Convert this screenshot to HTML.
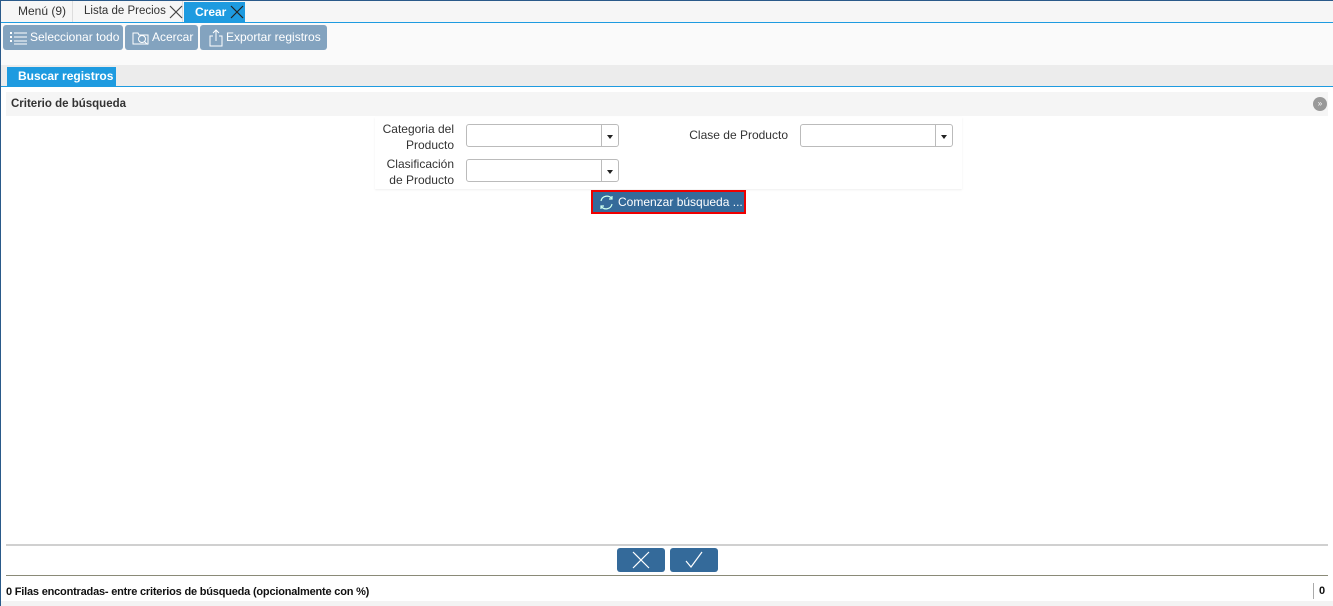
<!DOCTYPE html>
<html><head><meta charset="utf-8"><style>
*{box-sizing:border-box;margin:0;padding:0}
body{width:1333px;height:606px;overflow:hidden;background:#fff;font-family:"Liberation Sans",sans-serif;font-size:12px;color:#333;position:relative}
.a{position:absolute;white-space:nowrap}
.tab{position:absolute;top:1px;height:21px;line-height:21px;font-size:12px;color:#333;border-right:1px solid #ddd;white-space:nowrap}
.tb{position:absolute;top:25px;height:25px;background:#83a3bf;border-radius:3px;color:#fff;font-size:12px;line-height:25px;white-space:nowrap;overflow:hidden}
.lbl{position:absolute;text-align:right;font-size:12px;color:#333;line-height:16px}
.sel{position:absolute;width:153px;height:23px;border:1px solid #bbb;border-radius:3px;background:#fff}
.sel:after{content:"";position:absolute;right:0;top:0;width:16px;height:21px;border-left:1px solid #bbb}
.sel i{position:absolute;right:5px;top:10px;border-left:3px solid transparent;border-right:3px solid transparent;border-top:4px solid #222}
.bb{position:absolute;top:548px;width:48px;height:24px;background:#346a9a;border-radius:3px}
</style></head><body>
<div class="a" style="left:0;top:0;width:1333px;height:22px;background:#f6f6f6"></div>
<div class="a" style="left:0;top:0;width:1333px;height:1px;background:#2a5a8a"></div>
<div class="tab" style="left:6px;width:67px;padding-left:12px">Menú (9)</div>
<div class="tab" style="left:73px;width:110px;padding-left:11px;font-size:11.5px">Lista de Precios</div>
<svg class="a" style="left:169px;top:5px" width="14" height="14"><path d="M1 1L13 13M13 1L1 13" stroke="#444" stroke-width="1.2"/></svg>
<div class="a" style="left:184px;top:2px;width:61px;height:20px;background:#1e9be0;color:#fff;font-weight:bold;line-height:20px;padding-left:11px">Crear</div>
<svg class="a" style="left:230px;top:5px" width="14" height="14"><path d="M1 1L13 13M13 1L1 13" stroke="#222" stroke-width="1.2"/></svg>
<div class="a" style="left:0;top:22px;width:1333px;height:1px;background:#1e9be0"></div>
<div class="a" style="left:0;top:23px;width:1333px;height:42px;background:#fafafa"></div>
<div class="tb" style="left:3px;width:120px;padding-left:27px">Seleccionar todo</div>
<svg class="a" style="left:10px;top:31px" width="18" height="14"><g fill="#fff"><rect x="0" y="1" width="2" height="2"/><rect x="0" y="5" width="2" height="2"/><rect x="0" y="9" width="2" height="2"/><rect x="4" y="1.5" width="13" height="1"/><rect x="4" y="5.5" width="13" height="1"/><rect x="4" y="9.5" width="13" height="1"/><rect x="4" y="12.5" width="13" height="1"/></g></svg>
<div class="tb" style="left:125px;width:73px;padding-left:27px">Acercar</div>
<svg class="a" style="left:132px;top:30px" width="18" height="16"><g fill="none" stroke="#fff"><path d="M1 3h5l1 2h9v9H1z"/><circle cx="10" cy="9" r="3.5"/><path d="M12.5 11.5l3 3"/></g></svg>
<div class="tb" style="left:200px;width:127px;padding-left:26px">Exportar registros</div>
<svg class="a" style="left:208px;top:29px" width="16" height="18"><g fill="none" stroke="#fff"><path d="M5 7H2v10h12V7h-3M8 12V1M5 4l3-3 3 3"/></g></svg>
<div class="a" style="left:0;top:65px;width:1333px;height:21px;background:#ececec"></div>
<div class="a" style="left:7px;top:67px;width:109px;height:19px;background:#1e9be0;color:#fff;font-weight:bold;font-size:12px;line-height:18px;padding-left:11px">Buscar registros</div>
<div class="a" style="left:0;top:86px;width:1333px;height:1px;background:#1e9be0"></div>
<div class="a" style="left:6px;top:92px;width:1322px;height:24px;background:#f5f5f5;font-weight:bold;font-size:11.5px;line-height:24px;padding-left:5px">Criterio de búsqueda</div>
<div class="a" style="left:1313px;top:97px;width:14px;height:14px;border-radius:50%;background:#999;color:#fff;font-size:8px;text-align:center;line-height:13px">»</div>
<div class="a" style="left:375px;top:117px;width:587px;height:72px;background:#fff;box-shadow:0 1px 2px #eee"></div>
<div class="lbl" style="left:370px;top:121px;width:84px">Categoria del<br>Producto</div>
<div class="sel" style="left:466px;top:124px"><i></i></div>
<div class="lbl" style="left:680px;top:127px;width:108px">Clase de Producto</div>
<div class="sel" style="left:800px;top:124px"><i></i></div>
<div class="lbl" style="left:370px;top:156px;width:84px">Clasificación<br>de Producto</div>
<div class="sel" style="left:466px;top:159px"><i></i></div>
<div class="a" style="left:591px;top:190px;width:155px;height:24px;border:2px solid #e00;background:#356a9a;color:#fff;font-size:12px;line-height:20px;padding-left:25px">Comenzar búsqueda ...</div>
<svg class="a" style="left:598px;top:194px" width="17" height="17"><g fill="none" stroke="#cfe" stroke-width="1.2"><path d="M3 7a6 6 0 0 1 11-2M14 10a6 6 0 0 1-11 2"/><path d="M14 2v3h-3M3 15v-3h3"/></g></svg>
<div class="a" style="left:6px;top:544px;width:1322px;height:2px;background:#d0d0d0"></div>
<div class="bb" style="left:617px"></div>
<svg class="a" style="left:632px;top:551px" width="18" height="18"><path d="M1 1L17 17M17 1L1 17" stroke="#fff" stroke-width="1.2"/></svg>
<div class="bb" style="left:670px"></div>
<svg class="a" style="left:685px;top:551px" width="18" height="18"><path d="M1 10L6 16L17 1" fill="none" stroke="#fff" stroke-width="1.2"/></svg>
<div class="a" style="left:6px;top:575px;width:1322px;height:1px;background:#8a8a78"></div>
<div class="a" style="left:6px;top:585px;font-size:11px;color:#111;line-height:14px;font-weight:bold;letter-spacing:-0.2px">0 Filas encontradas- entre criterios de búsqueda (opcionalmente con %)</div>
<div class="a" style="left:1313px;top:583px;width:1px;height:16px;background:#aaa"></div>
<div class="a" style="left:1319px;top:585px;font-size:11px;font-weight:bold;color:#111">0</div>
<div class="a" style="left:0;top:601px;width:1333px;height:5px;background:#f3f3f3"></div>
<div class="a" style="left:0;top:0;width:1px;height:606px;background:#2a5a8a"></div>
</body></html>
